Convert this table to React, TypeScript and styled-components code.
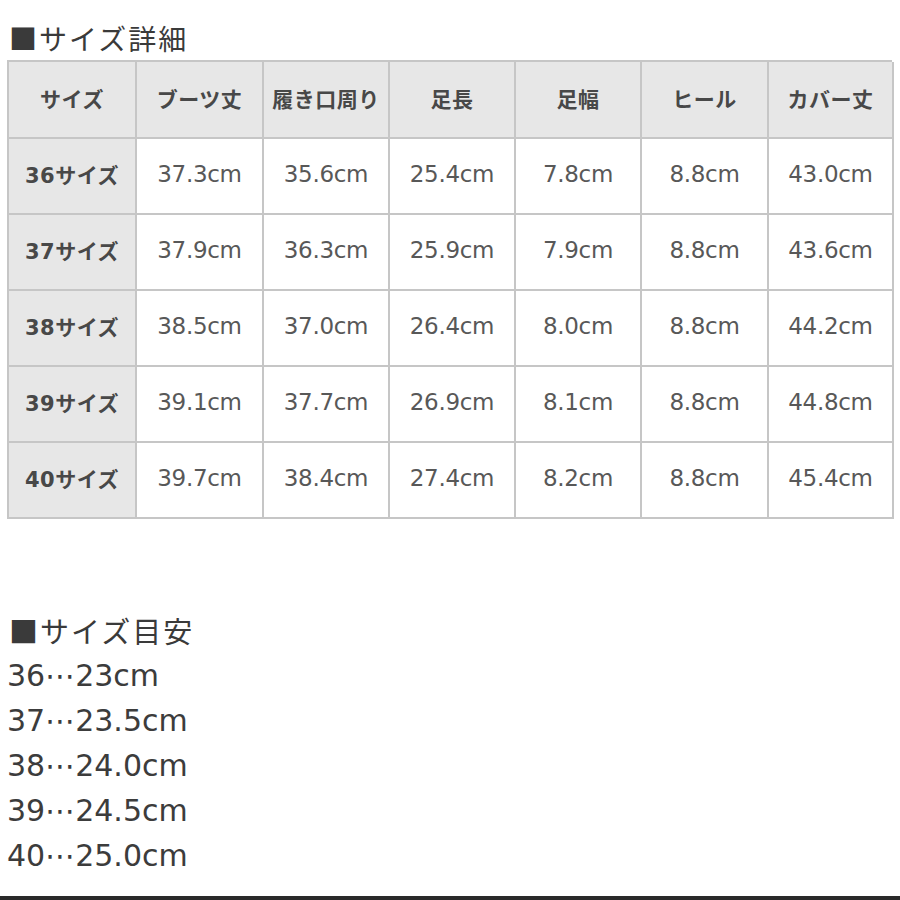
import React from 'react';
import styled, {createGlobalStyle} from "styled-components";

const GlobalStyle = createGlobalStyle`
  body {
    margin: 0;
    background: #fff;
    font-family: "DejaVu Sans", "Noto Sans CJK JP", sans-serif;
  }
`;

const Page = styled.div`
  width: 900px;
  height: 900px;
  display: flex;
  flex-direction: column;
  box-sizing: border-box;
  overflow: hidden;
`;

const Section = styled.div`
  padding: 18px 8px 0 7px;
`;

const Title = styled.h2<{ size: number; lh: number }>`
  margin: 0 0 0 2px;
  font-size: ${p => p.size}px;
  line-height: ${p => p.lh}px;
  font-weight: normal;
  color: #3a3a3a;
  font-family: "Noto Sans CJK JP", sans-serif;
  letter-spacing: 2px;
`;

const Grid = styled.div`
  display: grid;
  grid-template-columns: 128px 127px 126px 126px 126px 127px 125px;
  grid-template-rows: 77px repeat(5, 76px);
  border-top: 2px solid #c6c6c6;
  border-left: 2px solid #c6c6c6;
  width: 885px;
  box-sizing: border-box;
  margin-top: 2px;
`;

const Cell = styled.div<{ head?: boolean }>`
  display: flex;
  align-items: center;
  justify-content: center;
  padding-bottom: 4px;
  border-right: 2px solid #c6c6c6;
  border-bottom: 2px solid #c6c6c6;
  background: ${p => p.head ? '#e7e7e7' : '#fff'};
  color: ${p => p.head ? '#484848' : '#585858'};
  font-size: ${p => p.head ? 21 : 23}px;
  font-weight: ${p => p.head ? 'bold' : 'normal'};
  letter-spacing: ${p => p.head ? '0.5px' : '-0.3px'};
  white-space: nowrap;
`;

const GuideList = styled.div`
  margin-top: 89px;
`;

const GuideLine = styled.div`
  font-size: 30px;
  line-height: 45px;
  color: #3c3c3c;
`;

const Dots = styled.span`
  line-height: 0;
  letter-spacing: 0;
`;

const BottomLine = styled.div`
  margin-top: auto;
  height: 4px;
  background: #2a2a2a;
`;

const headers = ['サイズ', 'ブーツ丈', '履き口周り', '足長', '足幅', 'ヒール', 'カバー丈'];

const rows = [
    ['36サイズ', '37.3cm', '35.6cm', '25.4cm', '7.8cm', '8.8cm', '43.0cm'],
    ['37サイズ', '37.9cm', '36.3cm', '25.9cm', '7.9cm', '8.8cm', '43.6cm'],
    ['38サイズ', '38.5cm', '37.0cm', '26.4cm', '8.0cm', '8.8cm', '44.2cm'],
    ['39サイズ', '39.1cm', '37.7cm', '26.9cm', '8.1cm', '8.8cm', '44.8cm'],
    ['40サイズ', '39.7cm', '38.4cm', '27.4cm', '8.2cm', '8.8cm', '45.4cm'],
];

const guide = [
    ['36', '23cm'],
    ['37', '23.5cm'],
    ['38', '24.0cm'],
    ['39', '24.5cm'],
    ['40', '25.0cm'],
];

const App = () => {
    return (
        <Page>
            <GlobalStyle/>
            <Section>
                <Title size={28} lh={40}>■サイズ詳細</Title>
                <Grid>
                    {headers.map(h => <Cell head key={h}>{h}</Cell>)}
                    {rows.map(r => r.map((v, i) => (
                        <Cell head={i === 0} key={r[0] + i}>{v}</Cell>
                    )))}
                </Grid>
                <GuideList>
                    <Title size={29} lh={45}>■サイズ目安</Title>
                    {guide.map(([s, cm]) => (
                        <GuideLine key={s}>{s}<Dots>⋯</Dots>{cm}</GuideLine>
                    ))}
                </GuideList>
            </Section>
            <BottomLine/>
        </Page>
    );
};

export default App;
